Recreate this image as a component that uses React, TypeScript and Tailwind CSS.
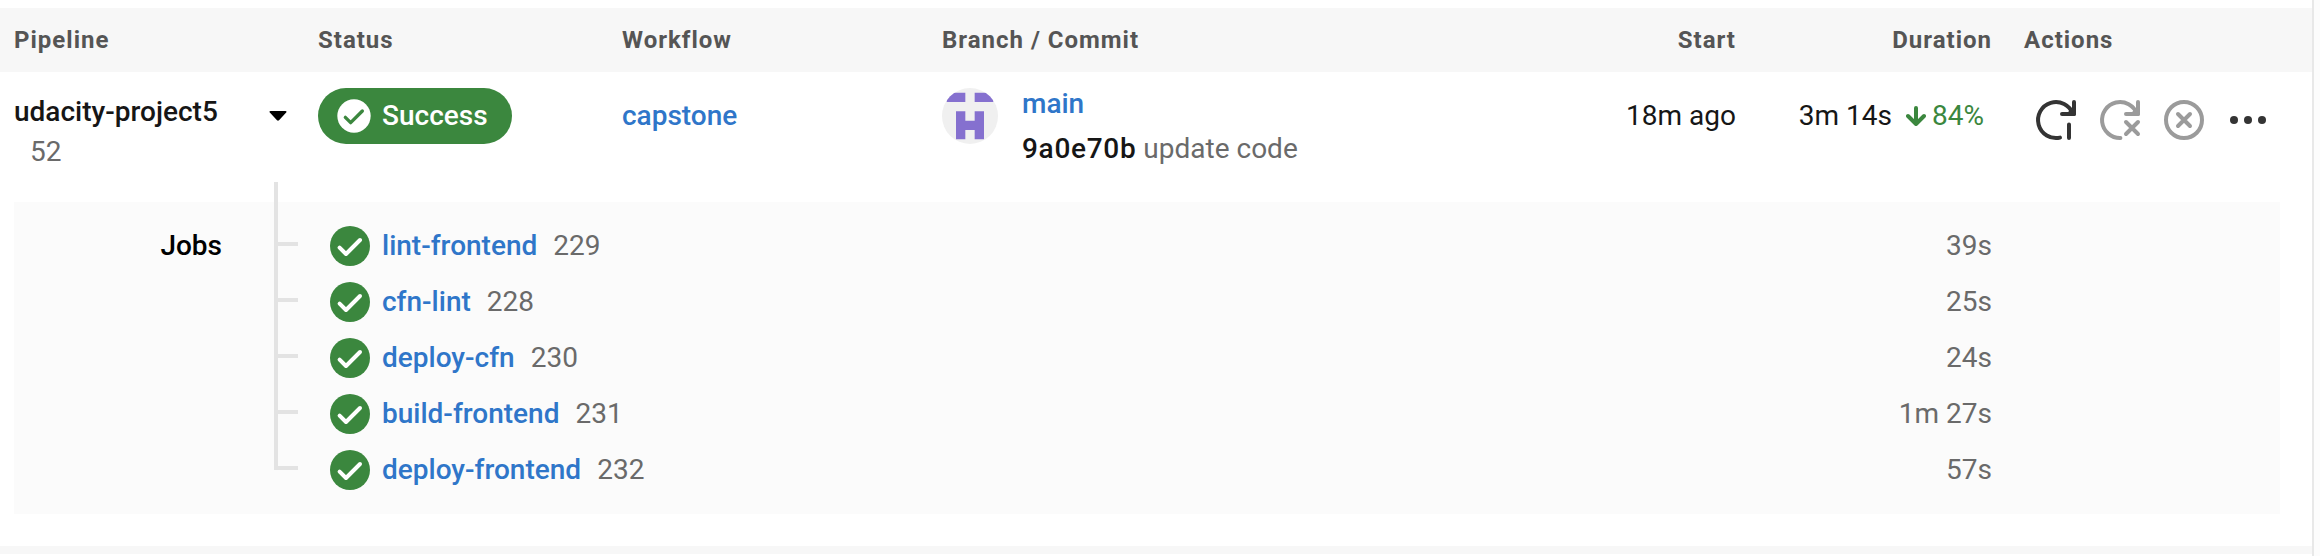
import React from "react";

type Job = { name: string; id: number; duration: string };

const jobs: Job[] = [
  { name: "lint-frontend", id: 229, duration: "39s" },
  { name: "cfn-lint", id: 228, duration: "25s" },
  { name: "deploy-cfn", id: 230, duration: "24s" },
  { name: "build-frontend", id: 231, duration: "1m 27s" },
  { name: "deploy-frontend", id: 232, duration: "57s" },
];

function CheckCircle({ className, disc, tick }: { className: string; disc: string; tick: string }) {
  return (
    <svg viewBox="0 0 24 24" className={className} aria-hidden="true">
      <circle cx="12" cy="12" r="10" fill={disc} />
      <path d="M6.8 12.8 10 16 17 9" fill="none" stroke={tick} strokeWidth="2" strokeLinecap="round" strokeLinejoin="round" />
    </svg>
  );
}

function Avatar() {
  return (
    <svg viewBox="0 0 6 6" className="size-14 shrink-0 rounded-full bg-[#f0f0f0]" role="img" aria-label="Author">
      <path
        fill="#8570cf"
        d="M.5.5h2v1h-2zM3.5.5h2v1h-2zM1.5 2.5h1v1h1v-1h1v3h-1v-1h-1v1h-1z"
      />
    </svg>
  );
}

function ActionButton({ label, disabled, children }: { label: string; disabled?: boolean; children: React.ReactNode }) {
  return (
    <button
      type="button"
      aria-label={label}
      disabled={disabled}
      className="flex size-12 items-center justify-center text-[#343434] disabled:text-[#9b9b9b]"
    >
      <svg
        viewBox="0 0 24 24"
        className="size-12"
        fill="none"
        stroke="currentColor"
        strokeWidth="2"
        strokeLinecap="round"
        strokeLinejoin="round"
        aria-hidden="true"
      >
        {children}
      </svg>
    </button>
  );
}

export default function App() {
  return (
    <main className="flex min-h-screen bg-[#fcfcfc] pr-1.5 font-[Roboto,sans-serif] text-[28px] leading-10 text-[#161616]">
      <div className="min-w-0 flex-1 border-r-2 border-[#e8e8e8] bg-white pt-2">
        <table className="w-full table-fixed border-collapse text-left">
          <colgroup>
            <col className="w-[318px]" />
            <col className="w-[304px]" />
            <col className="w-80" />
            <col />
            <col className="w-52" />
            <col className="w-64" />
            <col className="w-80" />
          </colgroup>
          <thead className="bg-[#f7f7f7] text-2xl tracking-[1px] text-[#555]">
            <tr className="h-16">
              <th className="pl-3.5 font-bold">Pipeline</th>
              <th className="font-bold">Status</th>
              <th className="font-bold">Workflow</th>
              <th className="font-bold">Branch / Commit</th>
              <th className="text-right font-bold">Start</th>
              <th className="text-right font-bold">Duration</th>
              <th className="pl-8 font-bold">Actions</th>
            </tr>
          </thead>
          <tbody>
            <tr className="align-top">
              <td className="pt-5 pr-5 pb-[30px] pl-3.5">
                <div className="flex items-start justify-between">
                  <div>
                    <div className="font-medium">udacity-project5</div>
                    <div className="pl-4 text-[#6a6a6a]">52</div>
                  </div>
                  <button type="button" aria-label="Toggle jobs" aria-expanded="true" className="mt-1 flex size-10 items-center justify-center">
                    <svg viewBox="0 0 18 10" className="h-2.5 w-[18px]" aria-hidden="true">
                      <path d="M1.5 0h15c1 0 1.4.8.7 1.5L10 9.2c-.6.6-1.4.6-2 0L.8 1.5C.1.8.5 0 1.5 0z" fill="#000" />
                    </svg>
                  </button>
                </div>
              </td>
              <td className="pt-4">
                <div className="inline-flex h-14 items-center gap-2 rounded-full bg-[#3b873e] pr-6 pl-4 align-top font-medium text-white">
                  <CheckCircle className="size-10" disc="#fff" tick="#3b873e" />
                  Success
                </div>
              </td>
              <td className="pt-6">
                <a href="#capstone" className="font-medium text-[#2f76c9]">capstone</a>
              </td>
              <td className="pt-3">
                <div className="flex gap-6">
                  <div className="pt-1">
                    <Avatar />
                  </div>
                  <div className="flex flex-col gap-[5px]">
                    <a href="#main" className="font-medium text-[#2f76c9]">main</a>
                    <div className="text-[#6a6a6a]">
                      <a href="#9a0e70b" className="font-medium tracking-wide text-[#161616]">9a0e70b</a> update code
                    </div>
                  </div>
                </div>
              </td>
              <td className="pt-6 text-right">18m ago</td>
              <td className="pt-6 pr-2">
                <div className="flex items-center justify-end gap-3.5">
                  <span>3m 14s</span>
                  <span className="flex items-center gap-1.5 text-[#3b873e]">
                    <svg viewBox="0 0 20 20" className="size-5" fill="none" stroke="currentColor" strokeWidth="4" strokeLinecap="round" strokeLinejoin="round" aria-hidden="true">
                      <path d="M10 2v15M2 10l8 8 8-8" />
                    </svg>
                    84%
                  </span>
                </div>
              </td>
              <td className="pt-6 pl-10">
                <div className="flex gap-4">
                  <ActionButton label="Rerun workflow from start">
                    <path d="M20.5 9A9 9 0 1 0 14 20.8M21 3v6h-6M18.5 14.2V21" />
                    <path d="M18.5 9 21 6.5V9z" fill="currentColor" />
                  </ActionButton>
                  <ActionButton label="Rerun workflow from failed" disabled>
                    <path d="M20.5 9A9 9 0 1 0 12.2 21M21 3v6h-6M15 13l6 6M21 13l-6 6" />
                    <path d="M18.5 9 21 6.5V9z" fill="currentColor" />
                  </ActionButton>
                  <ActionButton label="Cancel workflow" disabled>
                    <circle cx="12" cy="12" r="9" />
                    <path d="M9 9l6 6M15 9l-6 6" />
                  </ActionButton>
                  <ActionButton label="More actions">
                    <g fill="currentColor" stroke="none">
                      <circle cx="5" cy="12" r="2" />
                      <circle cx="12" cy="12" r="2" />
                      <circle cx="19" cy="12" r="2" />
                    </g>
                  </ActionButton>
                </div>
              </td>
            </tr>
            <tr>
              <td colSpan={7} className="pr-8 pb-8 pl-3.5">
                <section aria-labelledby="jobs-label" className="flex items-start bg-[#fbfbfb] py-6 pr-72">
                  <h2 id="jobs-label" className="w-52 shrink-0 text-right font-medium text-black">Jobs</h2>
                  <div className="-mt-11 ml-[52px] flex w-6 shrink-0 flex-col" aria-hidden="true">
                    <div className="h-16 border-b-4 border-l-4 border-[#e3e3e3]" />
                    {jobs.slice(1).map((job) => (
                      <div key={job.id} className="h-14 border-b-4 border-l-4 border-[#e3e3e3]" />
                    ))}
                  </div>
                  <ul className="ml-7 flex min-w-0 flex-1 flex-col gap-4">
                    {jobs.map((job) => (
                      <li key={job.id} className="flex h-10 items-center gap-2">
                        <CheckCircle className="size-12 shrink-0" disc="#3b873e" tick="#fff" />
                        <a href={`#${job.name}`} className="font-medium text-[#2f76c9]">{job.name}</a>
                        <span className="pl-2 text-[#6a6a6a]">{job.id}</span>
                        <span className="ml-auto text-[#6a6a6a]">{job.duration}</span>
                      </li>
                    ))}
                  </ul>
                </section>
              </td>
            </tr>
          </tbody>
        </table>
        <div className="h-2 bg-[#f7f7f7]" />
      </div>
    </main>
  );
}
